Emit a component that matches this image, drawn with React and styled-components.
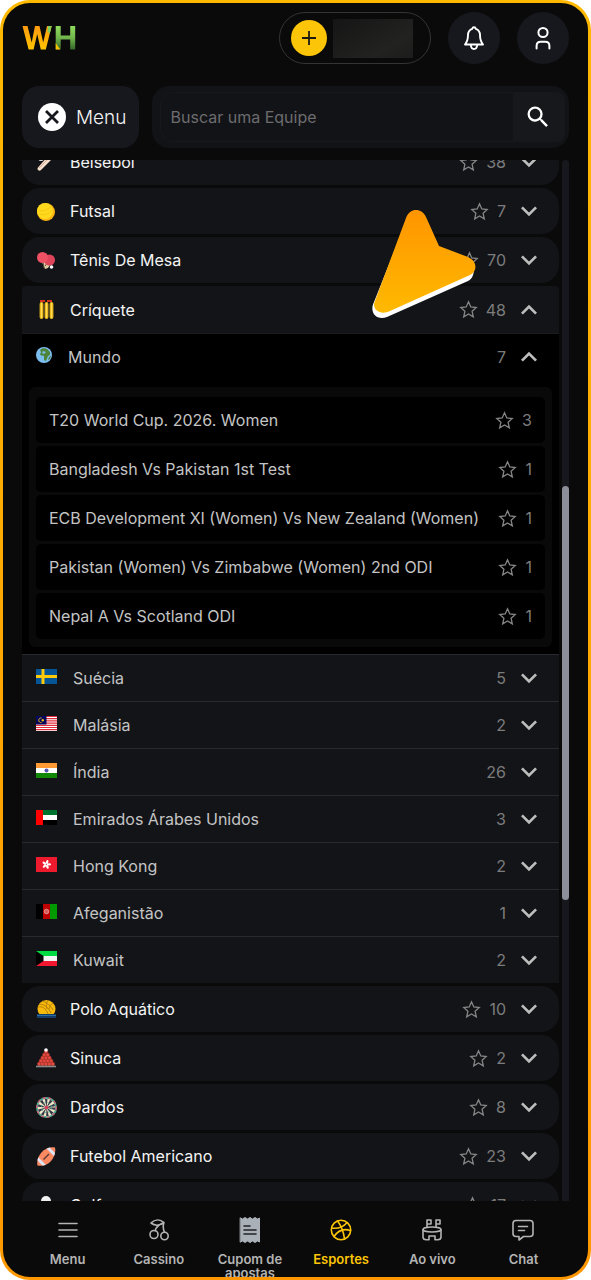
import React, { useLayoutEffect, useRef } from "react";
import styled, { createGlobalStyle } from "styled-components";
import { MdExpandLess, MdExpandMore, MdSearch } from "react-icons/md";

const GlobalStyle = createGlobalStyle`
  * {
    box-sizing: border-box;
  }

  body {
    margin: 0;
    background: #ffffff;
    font-family: Inter, "Liberation Sans", sans-serif;
  }

  button,
  input {
    font: inherit;
    color: inherit;
    border: 0;
    padding: 0;
    background: none;
  }

  a {
    color: inherit;
    text-decoration: none;
  }

  svg {
    flex: none;
  }
`;

const Frame = styled.div`
  height: 100vh;
  padding: 3px;
  border-radius: 30px;
  background: linear-gradient(#ffb900, #ff9800);
`;

const Screen = styled.div`
  display: flex;
  flex-direction: column;
  height: 100%;
  padding: 9px 19px 0;
  border-radius: 27px;
  background: #0a0a0a;
  overflow: hidden;
`;

const Header = styled.header`
  display: flex;
  align-items: center;
  gap: 17px;
  margin-bottom: 22px;
`;

const LogoLink = styled.a`
  display: flex;
  margin-right: auto;
`;

const Wallet = styled.div`
  display: flex;
  align-items: center;
  gap: 6px;
  width: 152px;
  height: 52px;
  padding-left: 11px;
  border: 1px solid #343434;
  border-radius: 26px;
`;

const AddButton = styled.button`
  display: flex;
  align-items: center;
  justify-content: center;
  width: 36px;
  height: 36px;
  border-radius: 50%;
  background: #fdc507;
`;

const Balance = styled.div`
  width: 80px;
  height: 39px;
  background: linear-gradient(150deg, #151515, #222221 70%, #1c1c1c);
`;

const RoundButton = styled.button`
  display: flex;
  align-items: center;
  justify-content: center;
  width: 52px;
  height: 52px;
  border-radius: 50%;
  background: #17181e;
`;

const Toolbar = styled.div`
  display: flex;
  align-items: center;
  gap: 13px;
  margin-bottom: 12px;
`;

const MenuButton = styled.button`
  display: flex;
  align-items: center;
  gap: 10px;
  height: 62px;
  padding: 0 12px 0 16px;
  border-radius: 17px;
  background: #17181e;
  color: #f4f4f4;
  font-size: 19px;
  font-weight: 300;
`;

const Search = styled.form`
  display: flex;
  flex: 1;
  height: 62px;
  padding: 6px 4px 6px 8px;
  border-radius: 17px;
  background: #121317;
`;

const SearchInput = styled.input`
  flex: 1;
  min-width: 0;
  padding: 0 10px;
  border: 1px solid #17181c;
  border-right: 0;
  border-radius: 14px 0 0 14px;
  font-size: 16px;
  color: #f4f4f4;

  &::placeholder {
    color: #6c6c6e;
    opacity: 1;
  }
`;

const SearchButton = styled.button`
  display: flex;
  align-items: center;
  justify-content: center;
  width: 52px;
  padding-right: 3px;
  border-radius: 0 8px 8px 0;
  background: #17181c;
  color: #ffffff;
`;

const Content = styled.main`
  position: relative;
  display: flex;
  flex: 1;
  gap: 3px;
  min-height: 0;
`;

const Sports = styled.div`
  display: flex;
  flex: 1;
  flex-direction: column;
  gap: 3px;
  overflow-y: auto;
  scrollbar-width: none;
`;

const ScrollTrack = styled.div`
  display: grid;
  grid-template-rows: 326fr 414fr 301fr;
  width: 7px;
  border-radius: 4px 4px 0 0;
  background: #17181e;
`;

const ScrollThumb = styled.div`
  grid-row: 2;
  border-radius: 4px;
  background: #8c8e99;
`;

const Pointer = styled.svg`
  position: absolute;
  top: 42px;
  right: 83px;
  pointer-events: none;
`;

const Sport = styled.section`
  flex: none;
`;

const SportRow = styled.div`
  display: flex;
  align-items: center;
  height: ${({ $open }) => ($open ? 48 : 46)}px;
  padding: 0 14px;
  border-radius: ${({ $open }) => ($open ? "4px 4px 0 0" : "18px")};
  border-bottom: ${({ $open }) => ($open ? "1px solid #1b1c20" : "0")};
  background: #131418;
`;

const NameButton = styled.button`
  display: flex;
  flex: 1;
  align-items: center;
  gap: ${({ $gap }) => $gap || 13}px;
  height: 100%;
  text-align: left;
  font-size: 16px;
  color: ${({ $dim }) => ($dim ? "#c4c4c4" : "#f4f4f4")};
`;

const Star = styled.button`
  display: flex;
  margin-right: 8px;
  color: #858585;
`;

const Count = styled.span`
  font-size: 16px;
  color: #7c7c7c;
`;

const Expand = styled.button`
  display: flex;
  margin-left: 7px;
  color: #bdbdbd;
`;

const CountryRow = styled.div`
  display: flex;
  align-items: center;
  height: 47px;
  padding: 0 14px;
  border-top: 1px solid #292a2f;
  background: #131418;
`;

const WorldRow = styled.div`
  display: flex;
  align-items: center;
  height: 45px;
  padding: 0 14px;
`;

const World = styled.div`
  padding-bottom: 7px;
  background: #000000;
`;

const Leagues = styled.ul`
  display: flex;
  flex-direction: column;
  gap: 3px;
  margin: 8px 7px 0;
  padding: 10px 7px 8px;
  border-radius: 6px;
  background: #090909;
  list-style: none;
`;

const League = styled.li`
  display: flex;
  align-items: center;
  height: 46px;
  padding: 0 13px;
  border-radius: 5px;
  background: #000000;
`;

const LeagueLink = styled.a`
  flex: 1;
  font-size: 16px;
  color: #c4c4c4;
  white-space: nowrap;
`;

const BottomNav = styled.nav`
  display: flex;
  height: 76px;
  padding-top: 16px;
`;

const NavLink = styled.a`
  display: flex;
  flex: 1;
  flex-direction: column;
  align-items: center;
  gap: 9px;
  text-align: center;
  font-size: 13px;
  font-weight: 600;
  line-height: 14px;
  color: ${({ $active }) => ($active ? "#fdc507" : "#b4b4b4")};
`;

const Logo = () => (
  <svg width="54" height="26" viewBox="0 0 54 26" role="img" aria-label="WH">
    <defs>
      <linearGradient id="gold" x1="0" y1="0" x2="0" y2="1">
        <stop offset="0" stopColor="#ff9a10" />
        <stop offset="1" stopColor="#ffc400" />
      </linearGradient>
      <linearGradient id="grass" x1="0" y1="0" x2="0" y2="1">
        <stop offset="0" stopColor="#8fdc5c" />
        <stop offset="0.5" stopColor="#72b64c" />
        <stop offset="1" stopColor="#35682b" />
      </linearGradient>
    </defs>
    <path
      d="M.5 1h5l4.200 16.500L13 1h4.500l3.700 16.500L25 1h4.700l-5.900 23.500h-5L15.200 9l-3.600 15.500h-5z"
      fill="url(#gold)"
    />
    <path d="M26 1h3.700l-1.900 7.500-2.300-2z" fill="#7fcf5a" />
    <path d="M33.700 1h5v9.500h9.500V1h5v23.500h-5v-10h-9.500v10h-5z" fill="url(#grass)" />
    <path d="M33.700 18l4.500 6.500h-4.500z" fill="#ffc400" />
  </svg>
);

const StarIcon = () => (
  <svg width="19" height="19" viewBox="0 0 19 19" fill="none">
    <path
      d="M9.500 1.800 11.800 7l5.400.5-4.100 3.700 1.200 5.600-4.800-2.900-4.800 2.900 1.200-5.600-4.100-3.700L7.200 7z"
      stroke="currentColor"
      strokeWidth="1.300"
    />
  </svg>
);

const BellIcon = () => (
  <svg
    width="24"
    height="28"
    viewBox="0 0 24 28"
    fill="none"
    stroke="#fff"
    strokeWidth="1.900"
    strokeLinejoin="round"
    strokeLinecap="round"
  >
    <path d="M12 3.200c1 0 1.600.7 1.800 1.700 2.800 1 4.200 3.300 4.200 6.200 0 4.500.6 6.500 3 9.400H3c2.400-2.900 3-4.900 3-9.400 0-2.900 1.400-5.200 4.200-6.200.2-1 .8-1.700 1.800-1.700z" />
    <path d="M8.800 21c.2 2.600 1.400 4 3.200 4s3-1.400 3.200-4" />
  </svg>
);

const UserIcon = () => (
  <svg width="20" height="26" viewBox="0 0 20 26" fill="none" stroke="#fff" strokeWidth="2" strokeLinecap="round">
    <circle cx="10" cy="7.500" r="4.600" />
    <path d="M3.600 23.500V21c0-2.700 1.600-4.300 4.100-4.300h4.600c2.500 0 4.100 1.600 4.100 4.300v2.500" />
  </svg>
);

const CloseIcon = () => (
  <svg width="28" height="28" viewBox="0 0 28 28">
    <circle cx="14" cy="14" r="14" fill="#fff" />
    <path d="M8 8l12 12M20 8L8 20" stroke="#17181e" strokeWidth="2.800" />
  </svg>
);

const PlusIcon = () => (
  <svg width="14" height="14" viewBox="0 0 14 14">
    <path d="M7 0v14M0 7h14" stroke="#1c1a10" strokeWidth="1.800" />
  </svg>
);

const art = {
  baseball: (
    <>
      <path d="M2 18c-1-1-.5-2 .2-2.800L13 3l4 3L5 18c-1 1-2 1-3 0z" fill="#f6dfcd" />
      <path d="M3 16l8-8" stroke="#d8a88c" />
      <circle cx="5" cy="6" r="3" fill="#e8e8e8" />
    </>
  ),
  futsal: (
    <>
      <circle cx="10" cy="11" r="9" fill="#fbb414" />
      <circle cx="9" cy="10" r="8" fill="#ffd91c" />
      <path d="M2 9c4 2 9 0 13-3M3 13c5 2 9 0 14-4" stroke="#f6c814" fill="none" />
    </>
  ),
  tableTennis: (
    <>
      <path d="M5 10l4 9 3-1 3-5z" fill="#e3cba2" />
      <path d="M7 12l1 6M12 12l-3 4" stroke="#59493c" />
      <circle cx="13.500" cy="10" r="5.500" fill="#e0445a" />
      <circle cx="6.500" cy="7.500" r="5.500" fill="#ee5064" />
      <circle cx="15.500" cy="17" r="1.800" fill="#fff" />
    </>
  ),
  cricket: (
    <>
      <path d="M4 2h5M11 2h5" stroke="#d8321c" strokeWidth="2" />
      <path d="M5.500 5v13M10.500 5v13M15.500 5v13" stroke="#e9b91f" strokeWidth="3.800" strokeLinecap="round" />
      <path d="M5.500 4v15M10.500 4v15M15.500 4v15" stroke="#ffdc52" />
    </>
  ),
  waterPolo: (
    <>
      <circle cx="10.500" cy="10" r="9" fill="#f7b80c" />
      <path
        d="M2 8c4-1 8 1 10 7M3 5c5 0 9 3 12 9M6 2c4 1 8 4 11 9M12 1c-2 3-2 6-1 9M17 4c-2 1-4 4-4 6"
        stroke="#a8770f"
        strokeWidth="0.800"
        fill="none"
      />
      <path d="M1 15h19v4H1z" fill="#123d68" />
      <path d="M1 16.500h19" stroke="#2d6b9c" />
    </>
  ),
  snooker: (
    <>
      <g fill="#e4473b" stroke="#98302d" strokeWidth=".5">
        {[0, 1, 2, 3, 4].map((row) =>
          Array.from({ length: row + 1 }, (_, i) => (
            <circle key={`${row}-${i}`} cx={10 - row * 1.7 + i * 3.4} cy={4 + row * 3} r="1.900" />
          ))
        )}
      </g>
      <circle cx="10" cy="2" r="1.800" fill="#fff" />
      <path d="M0 18.500h20" stroke="#8a8a8a" strokeWidth="1.600" />
    </>
  ),
  darts: (
    <>
      <circle cx="10.500" cy="10.500" r="10.500" fill="#4eaa92" />
      <circle cx="10.500" cy="10.500" r="9.800" fill="none" stroke="#d75470" strokeWidth="1.300" strokeDasharray="3 3" />
      <circle cx="10.500" cy="10.500" r="8.700" fill="#f2e6c4" />
      <circle cx="10.500" cy="10.500" r="4.600" fill="none" stroke="#36354a" strokeWidth="8" strokeDasharray="1.450 1.440" />
      <circle cx="10.500" cy="10.500" r="5" fill="none" stroke="#4eaa92" strokeDasharray="2 2" />
      <circle cx="10.500" cy="10.500" r="1.800" fill="#d73e5c" />
    </>
  ),
  football: (
    <>
      <clipPath id="ball">
        <path d="M1.500 19.500C-.5 11 8-.5 19 1.500c2 9-6.500 20.500-17.500 18z" />
      </clipPath>
      <g clipPath="url(#ball)">
        <path d="M0 0h21v21H0z" fill="#fb8a63" />
        <path d="M0 11l10 10M10 0l11 11" stroke="#dce4f5" strokeWidth="3" />
      </g>
      <path d="M7.500 13.500l5.500-5.500" stroke="#5f3b34" strokeWidth="1.500" />
    </>
  ),
  golf: (
    <>
      <circle cx="10" cy="6" r="5" fill="#f0f0f0" />
      <path d="M10 11v9" stroke="#bdbdbd" strokeWidth="2" />
    </>
  ),
};

const SportIcon = ({ name }) => (
  <svg width="21" height="21" viewBox="0 0 21 21">
    {art[name]}
  </svg>
);

const GlobeIcon = () => (
  <svg width="16" height="19" viewBox="0 0 16 19">
    <circle cx="8" cy="8" r="8" fill="#7cbdf0" />
    <path d="M4 3c2-2 5-2 7-1l3 3v3l-2 1-2 5-2-1V9L4 8l1-3zM13 10l2-1-1 3-2 1z" fill="#4d8438" />
    <path d="M7 4l3 1-2 2-2-1z" fill="#7cbdf0" />
  </svg>
);

const flags = {
  sweden: (
    <>
      <path d="M0 0h21v15H0z" fill="#045496" />
      <path d="M7 0v15M0 7.500h21" stroke="#fdca0a" strokeWidth="3" />
    </>
  ),
  malaysia: (
    <>
      <path d="M0 0h21v15H0z" fill="#fff" />
      <path
        d="M0 .5h21M0 2.700h21M0 4.900h21M0 7.100h21M0 9.300h21M0 11.500h21M0 13.700h21"
        stroke="#e02c3c"
        strokeWidth="1.200"
      />
      <path d="M0 0h10.500v8.500H0z" fill="#06085e" />
      <path d="M5.500 2a2.300 2.300 0 1 0 0 4.500" stroke="#e9bb13" fill="none" />
      <circle cx="6.800" cy="4.300" r="1.200" fill="#e9bb13" />
    </>
  ),
  india: (
    <>
      <path d="M0 0h21v15H0z" fill="#fff" />
      <path d="M0 0h21v5H0z" fill="#ff9933" />
      <path d="M0 10h21v5H0z" fill="#128807" />
      <circle cx="10.500" cy="7.500" r="2" fill="#5555b5" />
    </>
  ),
  emirates: (
    <>
      <path d="M0 0h21v15H0z" fill="#fff" />
      <path d="M0 0h21v5H0z" fill="#00732f" />
      <path d="M0 10h21v5H0z" fill="#000" />
      <path d="M0 0h7v15H0z" fill="#f00" />
    </>
  ),
  hongKong: (
    <>
      <path d="M0 0h21v15H0z" fill="#ee1b2e" />
      {[15, 87, 159, 231, 303].map((angle) => (
        <ellipse
          key={angle}
          cx="10.500"
          cy="5"
          rx="1.200"
          ry="2.100"
          fill="#fff"
          transform={`rotate(${angle} 10.500 7.500)`}
        />
      ))}
    </>
  ),
  afghanistan: (
    <>
      <path d="M0 0h7v15H0z" fill="#000" />
      <path d="M7 0h7v15H7z" fill="#bf0000" />
      <path d="M14 0h7v15h-7z" fill="#009900" />
      <circle cx="10.500" cy="7.500" r="2.300" fill="#d95d5d" stroke="#efb3b3" strokeWidth=".7" />
    </>
  ),
  kuwait: (
    <>
      <path d="M0 0h21v15H0z" fill="#f3f3f3" />
      <path d="M0 0h21v5H0z" fill="#00d941" />
      <path d="M0 10h21v5H0z" fill="#f31830" />
      <path d="M0 0l7.500 5v5L0 15z" fill="#000" />
    </>
  ),
};

const FlagIcon = ({ name }) => (
  <svg width="21" height="19" viewBox="0 0 21 19">
    {flags[name]}
  </svg>
);

const navArt = {
  menu: <path d="M4 6.500h18M4 13h18M4 19.500h18" />,
  cherry: (
    <>
      <circle cx="8" cy="17.500" r="4" />
      <circle cx="18.500" cy="19" r="3.700" />
      <path d="M5 6c4-4 9-4 13-.5-4 3-8.500 4-13 .5zM18 5.500c-5 2-8 4-8.800 8.200M18 5.500c-1.500 4-1 6.500.5 9.700" />
    </>
  ),
  coupon: (
    <>
      <path
        d="M3.500 1l2 1 2.500-1.500L10.500 2 13 .5 15.500 2 18 .5 20.500 2l2-1v24l-2-1-2.500 1.500-2.500-1.500-2.500 1.500-2.500-1.500L8 25.500 5.500 24l-2 1z"
        fill="#aab0b8"
        stroke="#aab0b8"
        strokeWidth="1"
      />
      <path d="M7 9h6M7 13h12M7 17h12" stroke="#202226" />
    </>
  ),
  sports: (
    <>
      <circle cx="13" cy="13" r="9.700" />
      <path d="M3.700 11c6 1 11.500-1 15.500-5.500M9.500 4c4 5 6 10 7 18M6 19.500c4-6 9-8.500 16.500-6" />
    </>
  ),
  live: (
    <>
      <path d="M8 10V3h4v4H8M17 10V3h4v4h-4" />
      <ellipse cx="13" cy="12.500" rx="9" ry="2.500" />
      <path d="M4 13v7c0 1.500 1.500 2.700 3.500 2.700H10V19h6v3.700h2.500c2 0 3.500-1.200 3.500-2.700v-7" />
    </>
  ),
  chat: (
    <>
      <path d="M6 3.500h14c2 0 3 1 3 3v10c0 2-1 3-3 3h-6.500L9 23v-3.500H6c-2 0-3-1-3-3v-10c0-2 1-3 3-3z" />
      <path d="M8.500 9.500h9M8.500 13.500h6" />
    </>
  ),
};

const NavIcon = ({ name }) => (
  <svg
    width="26"
    height="26"
    viewBox="0 0 26 26"
    fill="none"
    stroke="currentColor"
    strokeWidth="1.600"
    strokeLinecap="round"
    strokeLinejoin="round"
  >
    {navArt[name]}
  </svg>
);

const sportsBefore = [
  { name: "Beisebol", icon: "baseball", count: 38 },
  { name: "Futsal", icon: "futsal", count: 7 },
  { name: "Tênis De Mesa", icon: "tableTennis", count: 70 },
];

const sportsAfter = [
  { name: "Polo Aquático", icon: "waterPolo", count: 10 },
  { name: "Sinuca", icon: "snooker", count: 2 },
  { name: "Dardos", icon: "darts", count: 8 },
  { name: "Futebol Americano", icon: "football", count: 23 },
  { name: "Golfe", icon: "golf", count: 17 },
];

const leagues = [
  { name: "T20 World Cup. 2026. Women", count: 3 },
  { name: "Bangladesh Vs Pakistan 1st Test", count: 1 },
  { name: "ECB Development XI (Women) Vs New Zealand (Women)", count: 1 },
  { name: "Pakistan (Women) Vs Zimbabwe (Women) 2nd ODI", count: 1 },
  { name: "Nepal A Vs Scotland ODI", count: 1 },
];

const countries = [
  { name: "Suécia", flag: "sweden", count: 5 },
  { name: "Malásia", flag: "malaysia", count: 2 },
  { name: "Índia", flag: "india", count: 26 },
  { name: "Emirados Árabes Unidos", flag: "emirates", count: 3 },
  { name: "Hong Kong", flag: "hongKong", count: 2 },
  { name: "Afeganistão", flag: "afghanistan", count: 1 },
  { name: "Kuwait", flag: "kuwait", count: 2 },
];

const navItems = [
  { label: "Menu", icon: "menu" },
  { label: "Cassino", icon: "cherry" },
  { label: "Cupom de apostas", icon: "coupon" },
  { label: "Esportes", icon: "sports", active: true },
  { label: "Ao vivo", icon: "live" },
  { label: "Chat", icon: "chat" },
];

function FavoriteButton({ name }) {
  return (
    <Star type="button" aria-label={`Favoritar ${name}`}>
      <StarIcon />
    </Star>
  );
}

function ExpandButton({ name, open }) {
  return (
    <Expand type="button" aria-label={`Expandir ${name}`} aria-expanded={!!open}>
      {open ? <MdExpandLess size={32} /> : <MdExpandMore size={32} />}
    </Expand>
  );
}

function SportItem({ name, icon, count, open, children }) {
  return (
    <Sport>
      <SportRow $open={open}>
        <NameButton type="button">
          <SportIcon name={icon} />
          {name}
        </NameButton>
        <FavoriteButton name={name} />
        <Count>{count}</Count>
        <ExpandButton name={name} open={open} />
      </SportRow>
      {children}
    </Sport>
  );
}

function Cricket() {
  return (
    <SportItem name="Críquete" icon="cricket" count={48} open>
      <World>
        <WorldRow>
          <NameButton type="button" $dim $gap={16}>
            <GlobeIcon />
            Mundo
          </NameButton>
          <Count>7</Count>
          <ExpandButton name="Mundo" open />
        </WorldRow>
        <Leagues>
          {leagues.map((league) => (
            <League key={league.name}>
              <LeagueLink href="#">{league.name}</LeagueLink>
              <FavoriteButton name={league.name} />
              <Count>{league.count}</Count>
            </League>
          ))}
        </Leagues>
      </World>
      {countries.map((country) => (
        <CountryRow key={country.name}>
          <NameButton type="button" $dim $gap={16}>
            <FlagIcon name={country.flag} />
            {country.name}
          </NameButton>
          <Count>{country.count}</Count>
          <ExpandButton name={country.name} />
        </CountryRow>
      ))}
    </SportItem>
  );
}

function App() {
  const listRef = useRef(null);

  useLayoutEffect(() => {
    listRef.current.scrollTop = 21;
  }, []);

  return (
    <Frame>
      <GlobalStyle />
      <Screen>
        <Header>
          <LogoLink href="#">
            <Logo />
          </LogoLink>
          <Wallet>
            <AddButton type="button" aria-label="Depositar">
              <PlusIcon />
            </AddButton>
            <Balance />
          </Wallet>
          <RoundButton type="button" aria-label="Notificações">
            <BellIcon />
          </RoundButton>
          <RoundButton type="button" aria-label="Perfil">
            <UserIcon />
          </RoundButton>
        </Header>
        <Toolbar>
          <MenuButton type="button">
            <CloseIcon />
            Menu
          </MenuButton>
          <Search>
            <SearchInput type="text" placeholder="Buscar uma Equipe" aria-label="Buscar uma Equipe" />
            <SearchButton type="button" aria-label="Buscar">
              <MdSearch size={28} />
            </SearchButton>
          </Search>
        </Toolbar>
        <Content>
          <Sports ref={listRef}>
            {sportsBefore.map((sport) => (
              <SportItem key={sport.name} {...sport} />
            ))}
            <Cricket />
            {sportsAfter.map((sport) => (
              <SportItem key={sport.name} {...sport} />
            ))}
          </Sports>
          <ScrollTrack>
            <ScrollThumb />
          </ScrollTrack>
          <Pointer width="120" height="124" viewBox="366 202 120 124" aria-hidden="true">
            <defs>
              <linearGradient id="pointer" x1="0" y1="0" x2="0" y2="1">
                <stop offset="0" stopColor="#ff9500" />
                <stop offset="1" stopColor="#ffb900" />
              </linearGradient>
            </defs>
            <path
              d="M374 302C369 312 376 321 387 317L468 281C472 279 473 276 474 271L439 250 406 222z"
              fill="#fff"
            />
            <path
              d="M406 218C410 207 422 208 426 217L439 246 468 257C477 261 478 271 470 275L390 311C380 316 371 309 375 301z"
              fill="url(#pointer)"
            />
          </Pointer>
        </Content>
        <BottomNav>
          {navItems.map((item) => (
            <NavLink key={item.label} href="#" $active={item.active}>
              <NavIcon name={item.icon} />
              {item.label}
            </NavLink>
          ))}
        </BottomNav>
      </Screen>
    </Frame>
  );
}

export default App;
